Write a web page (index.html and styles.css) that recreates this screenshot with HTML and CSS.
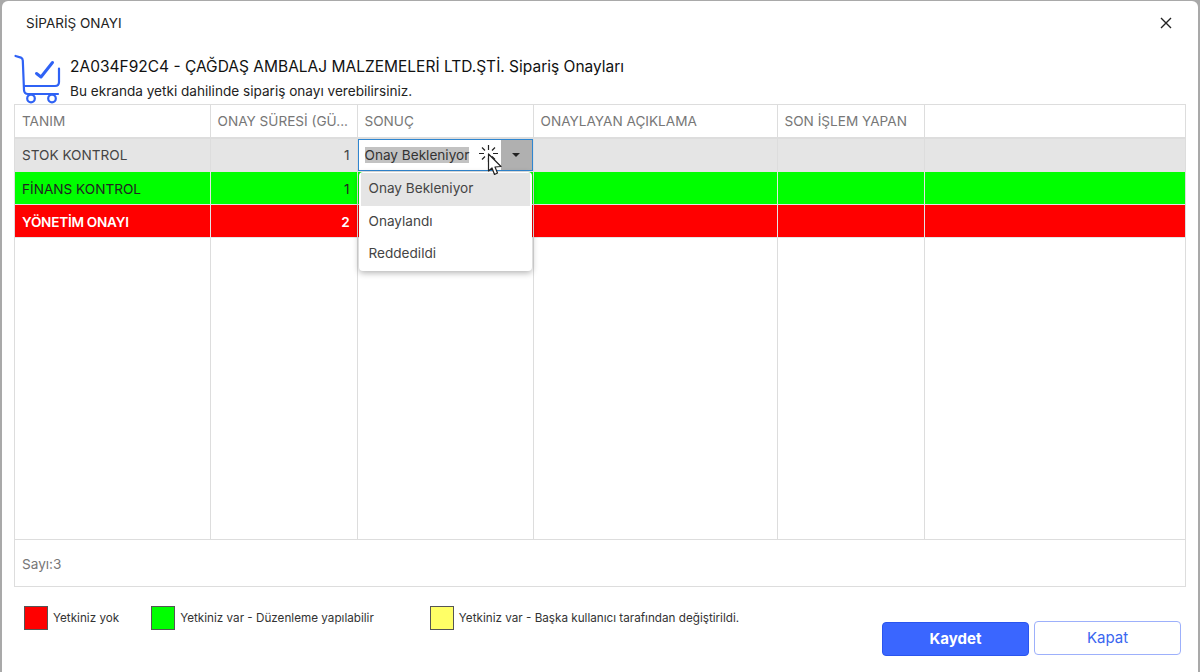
FILE: index.html
```html
<!DOCTYPE html>
<html>
<head>
    <meta charset="UTF-8">
    <title>Sipariş Onayı</title>
    <link rel="stylesheet" href="styles.css">
</head>
<body>
<div class="dialog">
    <div class="title_bar">
        <span class="title">SİPARİŞ ONAYI</span>
        <svg class="close" width="12" height="12" viewBox="0 0 12 12"><path d="M1 1L11 11M11 1L1 11" stroke="#222" stroke-width="1.4" fill="none"/></svg>
    </div>
    <div class="head">
        <svg class="cart" width="48" height="51" viewBox="0 0 48 51" fill="none" stroke="#2f62f5" stroke-width="2.2" stroke-linecap="round" stroke-linejoin="round">
            <path d="M1.5 3L7 4.6Q8.7 5.2 8.8 7.5L10 37Q10.2 41 14 41H44"/>
            <path d="M10 33H41Q45 33 45 29V15.5"/>
            <path d="M22.5 20.5L27 24L38.5 9.5" stroke-width="3"/>
            <circle cx="17" cy="45.5" r="3.8"/>
            <circle cx="38" cy="45.5" r="3.8"/>
        </svg>
        <div class="head_text">
            <div class="head_title">2A034F92C4 - ÇAĞDAŞ AMBALAJ MALZEMELERİ LTD.ŞTİ. Sipariş Onayları</div>
            <div class="head_sub">Bu ekranda yetki dahilinde sipariş onayı verebilirsiniz.</div>
        </div>
    </div>
    <div class="grid_box">
        <table class="grid">
            <colgroup>
                <col class="c1"><col class="c2"><col class="c3"><col class="c4"><col class="c5"><col>
            </colgroup>
            <tr class="hdr">
                <th>TANIM</th><th>ONAY SÜRESİ (GÜ...</th><th>SONUÇ</th><th>ONAYLAYAN AÇIKLAMA</th><th>SON İŞLEM YAPAN</th><th></th>
            </tr>
            <tr class="row gray">
                <td>STOK KONTROL</td><td class="num">1</td>
                <td class="edit_cell">
                    <div class="editor">
                        <span class="editor_text"><span class="sel">Onay Bekleniyor</span></span>
                        <span class="editor_btn"><i class="caret"></i></span>
                    </div>
                    <svg class="cursor" width="26" height="36" viewBox="0 0 26 36">
                        <g stroke="#222" stroke-width="1.2" fill="none">
                            <path d="M10.5 1V6M10.5 14V18M1 9.5H6M15 9.5H20M4 3.5L7 6.5M14 12.5L17 15.5M17 3.5L14 6.5M4 15.5L7 12.5"/>
                        </g>
                        <path d="M10.5 10L10.5 27L14 24L16.5 30.5L19.5 29L17 23L23 22.5Z" fill="#fff" stroke="#222" stroke-width="1.2" stroke-linejoin="round"/>
                    </svg>
                    <ul class="menu">
                        <li class="active">Onay Bekleniyor</li>
                        <li>Onaylandı</li>
                        <li>Reddedildi</li>
                    </ul>
                </td>
                <td></td><td></td><td></td>
            </tr>
            <tr class="row green">
                <td>FİNANS KONTROL</td><td class="num">1</td><td></td><td></td><td></td><td></td>
            </tr>
            <tr class="row red">
                <td>YÖNETİM ONAYI</td><td class="num">2</td><td></td><td></td><td></td><td></td>
            </tr>
            <tr class="filler"><td></td><td></td><td></td><td></td><td></td><td></td></tr>
        </table>
        <div class="count">Sayı:3</div>
    </div>
    <div class="foot">
        <div class="legend">
            <span class="key key_red"></span><span class="key_text w_red">Yetkiniz yok</span>
            <span class="key key_green"></span><span class="key_text w_green">Yetkiniz var - Düzenleme yapılabilir</span>
            <span class="key key_yellow"></span><span class="key_text">Yetkiniz var - Başka kullanıcı tarafından değiştirildi.</span>
        </div>
        <div class="btns">
            <button class="btn btn_save">Kaydet</button>
            <button class="btn btn_close">Kapat</button>
        </div>
    </div>
</div>
</body>
</html>
```

FILE: styles.css
```css
html,body{
    margin: 0;
    height: 100%;
    background: #a9a9a9;
    overflow: hidden;
}
body{
    font-family: Inter, "Liberation Sans", sans-serif;
    color: #333;
    padding: 1px 2px 0 2px;
    box-sizing: border-box;
}
.dialog{
    height: 671px;
    background: white;
    border-radius: 6px 6px 0 0;
    padding: 0 12px;
    box-sizing: border-box;
    display: flex;
    flex-direction: column;
}
.title_bar{
    height: 43px;
    display: flex;
    align-items: center;
    justify-content: space-between;
    padding: 0 14px 0 12px;
}
.title{
    font-size: 13.5px;
    color: #222;
}
.head{
    height: 60px;
    display: flex;
}
.cart{
    margin: 9px 9px 0 0;
}
.head_text{
    padding-top: 13px;
}
.head_title{
    font-size: 15.5px;
    line-height: 20px;
    color: #111;
    margin-left: -1px;
}
.head_sub{
    font-size: 13.6px;
    line-height: 18px;
    margin-top: 5px;
    margin-left: -1px;
    color: #222;
}
.grid_box{
    width: 1172px;
    height: 483px;
    border: 1px solid #ddd;
    box-sizing: border-box;
    display: flex;
    flex-direction: column;
}
.grid{
    width: 100%;
    height: 435px;
    flex: none;
    border-collapse: collapse;
    table-layout: fixed;
    font-size: 13.6px;
}
.c1{width: 195px;}
.c2{width: 147px;}
.c3{width: 176px;}
.c4{width: 244px;}
.c5{width: 147px;}
.grid th{
    font-weight: normal;
    text-align: left;
    color: #777;
    padding: 0 7px;
    border-right: 1px solid #ddd;
    border-bottom: 2px solid #ddd;
    white-space: nowrap;
    overflow: hidden;
}
.grid td{
    padding: 2px 7px 0 7px;
    border-right: 1px solid #ddd;
}
.grid th:last-child,.grid td:last-child{
    border-right: none;
}
.hdr{height: 33px;}
.row{height: 33px;}
.row td{
    border-bottom: 1px solid #e4e4e4;
    white-space: nowrap;
}
.grid .num{text-align: right;}
.gray{background: #e5e5e5; color: #444;}
.grid .gray td{padding-top: 0;}
.green{background: #00ff00; color: #222;}
.green td{border-right-color: #e4e4e4;}
.red{background: #ff0000; color: white; font-weight: 600; letter-spacing: -0.25px;}
.red td{border-right-color: #e4e4e4;}
.filler td{
    border-bottom: 1px solid #ddd;
}
.grid .edit_cell{
    position: relative;
    padding: 0;
}
.editor{
    position: absolute;
    left: 0;
    top: 0;
    right: 0;
    bottom: 0;
    background: white;
    border: 1px solid #2f86d0;
    box-sizing: border-box;
    display: flex;
}
.editor_text{
    flex: 1;
    padding-left: 6px;
    line-height: 31px;
}
.sel{background: #c2c2c2; color: #333;}
.editor_btn{
    width: 31px;
    background: #b0b0b0;
    display: flex;
    align-items: center;
    justify-content: center;
}
.caret{
    border-left: 4px solid transparent;
    border-right: 4px solid transparent;
    border-top: 4px solid #222;
}
.cursor{
    position: absolute;
    left: 120px;
    top: 5px;
    z-index: 3;
}
.menu{
    position: absolute;
    left: 1px;
    top: 33px;
    width: 173px;
    margin: 0;
    padding: 1px 2px 0 2px;
    box-sizing: border-box;
    list-style: none;
    background: white;
    border-radius: 4px;
    box-shadow: 0 2px 6px rgba(0,0,0,0.3);
    z-index: 2;
    font-weight: normal;
    color: #444;
}
.menu li{
    height: 32.5px;
    line-height: 31px;
    padding-left: 8px;
}
.menu .active{background: #e5e5e5;}
.count{
    flex: 1;
    display: flex;
    align-items: center;
    padding: 2px 0 0 7px;
    font-size: 13.6px;
    color: #777;
}
.foot{
    flex: 1;
    display: flex;
    justify-content: space-between;
    padding: 19px 5px 0 10px;
}
.legend{
    display: flex;
    align-items: flex-start;
    font-size: 11.7px;
    color: #333;
}
.key{
    width: 24px;
    height: 24px;
    border: 1px solid #555;
    box-sizing: border-box;
    margin-right: 5px;
}
.key_red{background: #ff0000;}
.key_green{background: #00ff00;}
.key_yellow{background: #ffff66;}
.key_text{line-height: 24px;}
.w_red{margin-right: 32px;}
.w_green{margin-right: 56px;}
.btns{
    display: flex;
    gap: 5px;
    padding-top: 16px;
    align-items: flex-start;
}
.btn{
    width: 147px;
    height: 34px;
    border-radius: 4px;
    font-family: inherit;
    font-size: 15px;
    padding: 0 0 2px 0;
}
.btn_save{
    background: #3a66ff;
    border: 1px solid #2a55ee;
    color: white;
    font-weight: bold;
}
.btn_close{
    background: white;
    border: 1px solid #9db0fb;
    color: #3a66f0;
    margin-top: -1px;
}
```
